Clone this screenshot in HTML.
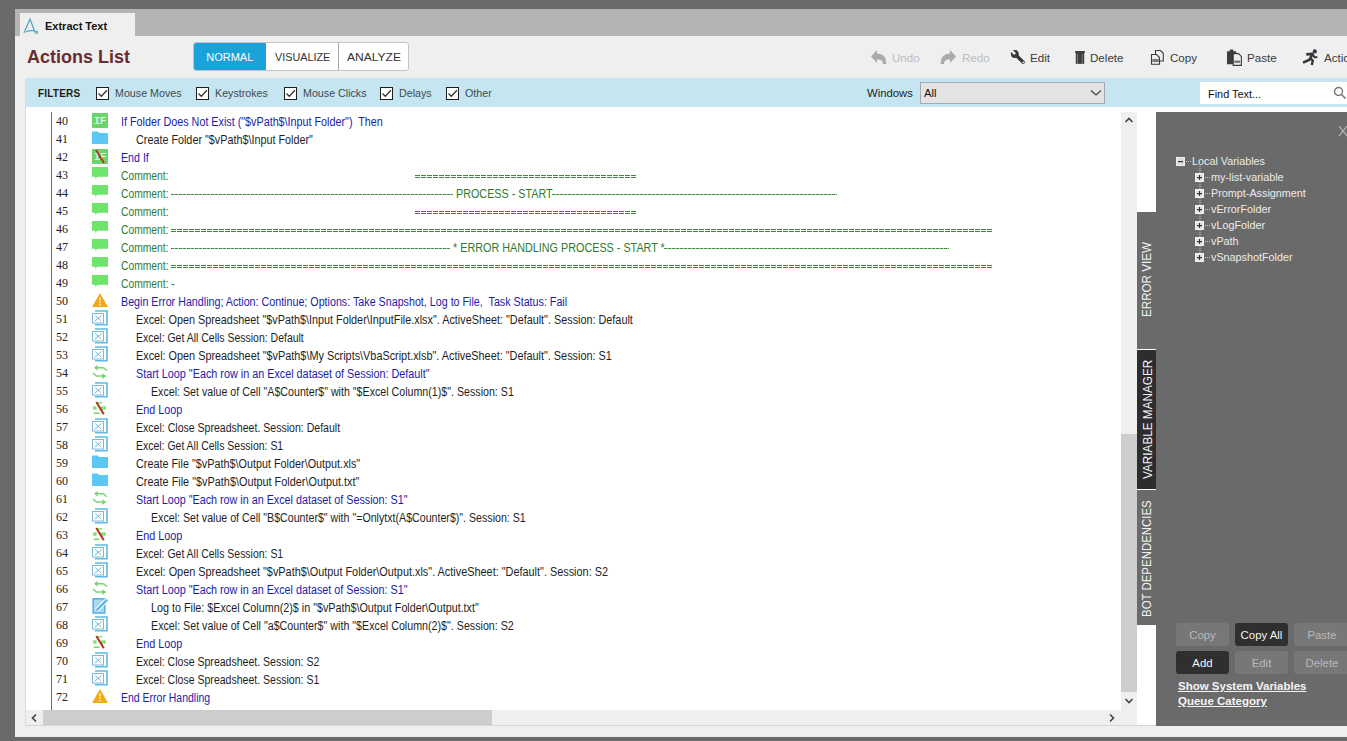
<!DOCTYPE html>
<html><head><meta charset="utf-8">
<style>
*{box-sizing:border-box;margin:0;padding:0}
html,body{width:1347px;height:741px;overflow:hidden;background:#6a6a6a;font-family:"Liberation Sans",sans-serif}
.abs{position:absolute}
#win{position:absolute;left:15px;top:9px;width:1332px;height:728px;background:#efefef}
#tabbar{position:absolute;left:15px;top:9px;width:1332px;height:27px;background:#b4b4b4}
#tab{position:absolute;left:20px;top:13px;width:115px;height:23px;background:#efefef}
#tabtxt{position:absolute;left:45px;top:18px;font-size:11px;font-weight:bold;color:#111;line-height:16px}
#title{position:absolute;left:27px;top:45px;font-size:18px;font-weight:bold;color:#6a2c30;line-height:24px}
#bgrp{position:absolute;left:193px;top:42px;width:216px;height:29px;border:1px solid #c4c4c4;border-radius:3px;background:#fff;overflow:hidden}
#bgrp div{position:absolute;top:0;height:27px;line-height:27px;font-size:11.6px;text-align:center;color:#333}
.tb{position:absolute;top:49px;height:18px}
.tbt{position:absolute;top:50px;font-size:11.6px;line-height:16px;color:#3a3a3a}
#filt{position:absolute;left:25px;top:78px;width:1322px;height:29px;background:#c5e6f0}
.cb{position:absolute;top:87px;width:13px;height:13px;border:1px solid #1e1e1e;background:#fff}
.cb svg{position:absolute;left:0;top:0}
.fl{position:absolute;top:85px;font-size:10.7px;line-height:16px;color:#3f4a50}
#code{position:absolute;left:26px;top:107px;width:1321px;height:619px;background:#fff}
.row{position:absolute;left:0;width:1095px;height:18px}
.ln{position:absolute;left:56px;top:1px;font-family:"Liberation Serif",serif;font-size:12px;line-height:16px;color:#222}
.ic{position:absolute;left:92px;top:0px;width:16px;height:16px}
.ic svg{display:block}
.tx{position:absolute;top:2px;font-size:12px;line-height:16px;white-space:pre;transform-origin:0 0}
.ctx{position:absolute}
.eq{position:absolute;height:4px;background:
  repeating-linear-gradient(90deg,#3a873a 0 4.6px,transparent 4.6px 6px) 0 0/100% 1px no-repeat,
  repeating-linear-gradient(90deg,#3a873a 0 4.6px,transparent 4.6px 6px) 0 2px/100% 1px no-repeat}
.dash{position:absolute;height:1px;background:repeating-linear-gradient(90deg,#3f8a3f 0 3.2px,#b5d5b5 3.2px 4px)}
#vline{position:absolute;left:51px;top:112px;width:1px;height:598px;background:#6a6a6a}
#vsb{position:absolute;left:1121px;top:112px;width:16px;height:614px;background:#efefef}
#vthumb{position:absolute;left:1121px;top:434px;width:16px;height:258px;background:#cdcdcd}
#hsb{position:absolute;left:26px;top:710px;width:1095px;height:16px;background:#efefef}
#hthumb{position:absolute;left:43px;top:710px;width:449px;height:15px;background:#cdcdcd}
#hline{position:absolute;left:26px;top:725px;width:1130px;height:1px;background:#d6d6d6}
#panel{position:absolute;left:1156px;top:112px;width:191px;height:614px;background:#6a6a6a}
.vtab{position:absolute;left:1137px;width:19px;background:#6a6a6a}
.vtt{position:absolute;font-size:12.5px;color:#f2f2f2;white-space:nowrap;transform-origin:0 0;line-height:14px}
.tree{position:absolute;font-size:10.8px;line-height:14px;color:#ececec;white-space:nowrap}
.pb{position:absolute;height:23px;border-radius:3px;font-size:11.4px;line-height:24px;text-align:center}
.pbd{background:#777;color:#b9b9b9}
.pba{background:#2f2f2f;color:#f4f4f4}
.lnk{position:absolute;left:1178px;font-size:11.5px;font-weight:bold;color:#f4f4f4;text-decoration:underline;line-height:14px;white-space:nowrap}
</style></head><body>
<div id="win"></div>
<div id="tabbar"></div>
<div id="tab"></div>
<svg class="abs" style="left:22px;top:17px" width="18" height="18" viewBox="0 0 18 18"><path d="M2 16 L8 2 L13 15 Q14 17 15.5 16 Q16 14 13 14 Q8 13 4 15" fill="none" stroke="#4aa6c4" stroke-width="1.2"/></svg>
<div id="tabtxt">Extract Text</div>
<div id="title">Actions List</div>
<div id="bgrp">
  <div style="left:0;width:72px;background:#19a3d8;color:#fff"><span style="display:inline-block;transform:scaleX(0.945)">NORMAL</span></div>
  <div style="left:72px;width:73px;border-left:0"><span style="display:inline-block;transform:scaleX(0.933)">VISUALIZE</span></div>
  <div style="left:144px;width:71px;border-left:1px solid #aaa"><span style="display:inline-block;transform:scaleX(1.04)">ANALYZE</span></div>
</div>
<!-- toolbar -->
<svg class="tb" style="left:869px" width="18" height="18" viewBox="0 0 18 18"><path d="M2 7.5 L8 1 V4.5 Q17.5 4.5 17.5 15 L14 15 Q14 10 8 10.5 V14 Z" fill="#ababab"/></svg>
<div class="tbt" style="left:892px;color:#bdbdbd">Undo</div>
<svg class="tb" style="left:940px" width="18" height="18" viewBox="0 0 18 18"><path d="M16 7.5 L10 1 V4.5 Q0.5 4.5 0.5 15 L4 15 Q4 10 10 10.5 V14 Z" fill="#ababab"/></svg>
<div class="tbt" style="left:962px;color:#bdbdbd">Redo</div>
<svg class="tb" style="left:1010px" width="16" height="18" viewBox="0 0 16 18"><circle cx="4.8" cy="5" r="3.9" fill="#383838"/><path d="M4.8 5 L13.2 13.2" stroke="#383838" stroke-width="3.3" stroke-linecap="round"/><path d="M6 4.2 L1.8 0 L0 1.8 L4.2 6 Z" fill="#efefef"/><circle cx="13.3" cy="13.3" r="0.9" fill="#efefef"/></svg>
<div class="tbt" style="left:1030px">Edit</div>
<svg class="tb" style="left:1074px" width="12" height="18" viewBox="0 0 12 18"><rect x="1.2" y="2" width="9.6" height="2" fill="#3c3c3c"/><rect x="1.8" y="4" width="8.4" height="10.8" fill="#3c3c3c"/><path d="M3.6 5 V14 M8.2 5 V14" stroke="#8a8a8a" stroke-width="0.9"/></svg>
<div class="tbt" style="left:1090px">Delete</div>
<svg class="tb" style="left:1150px" width="15" height="18" viewBox="0 0 15 18"><path d="M5.5 1.5 H10.5 L13.3 4.3 V12 H5.5 Z" fill="#efefef" stroke="#3c3c3c" stroke-width="1.1"/><path d="M1.5 5.5 H6.5 L9.5 8.5 V15.2 H1.5 Z" fill="#efefef" stroke="#3c3c3c" stroke-width="1.1"/><rect x="2.3" y="11.3" width="6.5" height="1.6" fill="#666"/><rect x="2.3" y="10.3" width="6.5" height="0.8" fill="#444"/></svg>
<div class="tbt" style="left:1170px">Copy</div>
<svg class="tb" style="left:1226px" width="17" height="18" viewBox="0 0 17 18"><path d="M1 2.2 H3.8 V0.4 H7.3 V2.2 H10.2 V15.2 H1 Z" fill="#3c3c3c"/><path d="M7.2 4.6 H12.5 L15.4 7.5 V16.4 H7.2 Z" fill="#efefef" stroke="#3c3c3c" stroke-width="1.1"/><rect x="8.3" y="11.5" width="6" height="2.4" fill="#777"/></svg>
<div class="tbt" style="left:1247px">Paste</div>
<svg class="tb" style="left:1302px" width="16" height="18" viewBox="0 0 16 18"><circle cx="12.8" cy="2.4" r="2.1" fill="#383838"/><g fill="none" stroke="#383838" stroke-linejoin="round"><path d="M4.2 5.4 L10.6 4.9 L7.4 10.8 L1 13.6" stroke-width="2.6"/><path d="M8.3 9.2 L10.8 11.6 L9.8 16" stroke-width="2.4"/><path d="M10.8 5.6 L12.4 8.3 L15.4 8.3" stroke-width="1.9"/></g></svg>
<div class="tbt" style="left:1324px">Actions</div>
<!-- filter bar -->
<div id="filt"></div>
<div class="fl" style="left:38px;top:86px;font-weight:bold;font-size:10px;color:#1c1c1c;letter-spacing:0.2px">FILTERS</div>
<div class="cb" style="left:96px"><svg width="11" height="11" viewBox="0 0 11 11"><path d="M1.5 5.5 L4.3 8.3 L10 2.3" fill="none" stroke="#333" stroke-width="1.3"/></svg></div>
<div class="fl" style="left:115px">Mouse Moves</div>
<div class="cb" style="left:196px"><svg width="11" height="11" viewBox="0 0 11 11"><path d="M1.5 5.5 L4.3 8.3 L10 2.3" fill="none" stroke="#333" stroke-width="1.3"/></svg></div>
<div class="fl" style="left:215px">Keystrokes</div>
<div class="cb" style="left:284px"><svg width="11" height="11" viewBox="0 0 11 11"><path d="M1.5 5.5 L4.3 8.3 L10 2.3" fill="none" stroke="#333" stroke-width="1.3"/></svg></div>
<div class="fl" style="left:303px">Mouse Clicks</div>
<div class="cb" style="left:380px"><svg width="11" height="11" viewBox="0 0 11 11"><path d="M1.5 5.5 L4.3 8.3 L10 2.3" fill="none" stroke="#333" stroke-width="1.3"/></svg></div>
<div class="fl" style="left:399px">Delays</div>
<div class="cb" style="left:446px"><svg width="11" height="11" viewBox="0 0 11 11"><path d="M1.5 5.5 L4.3 8.3 L10 2.3" fill="none" stroke="#333" stroke-width="1.3"/></svg></div>
<div class="fl" style="left:465px">Other</div>
<div class="fl" style="left:867px;font-size:11.3px;color:#222">Windows</div>
<div class="abs" style="left:920px;top:82px;width:185px;height:22px;background:#e3e3e3;border:1px solid #a3abb0"></div>
<div class="fl" style="left:924px;font-size:11.3px;color:#111;top:85px">All</div>
<svg class="abs" style="left:1090px;top:89px" width="12" height="8" viewBox="0 0 12 8"><path d="M1 1.5 L6 6 L11 1.5" fill="none" stroke="#444" stroke-width="1.2"/></svg>
<div class="abs" style="left:1200px;top:82px;width:147px;height:22px;background:#fff"></div>
<div class="fl" style="left:1208px;font-size:10.9px;color:#111;top:86px">Find Text...</div>
<svg class="abs" style="left:1333px;top:86px" width="14" height="14" viewBox="0 0 14 14"><circle cx="5.5" cy="5.5" r="4" fill="none" stroke="#777" stroke-width="1.4"/><path d="M8.5 8.5 L12.5 12.5" stroke="#777" stroke-width="1.6"/></svg>
<!-- code -->
<div id="code"></div><div class="abs" style="left:25px;top:107px;width:1px;height:619px;background:#dcdcdc"></div>
<div id="vline"></div>
<div class="row" style="top:112px"><span class="ln">40</span><span class="ic"><svg width="16" height="16" viewBox="0 0 16 16"><rect x="0" y="1" width="16" height="15" fill="#6bd56a"/><text x="8" y="11.5" font-family="Liberation Mono" font-size="10" fill="#f4fff4" text-anchor="middle" stroke="#f4fff4" stroke-width="0.2">IF</text></svg></span><span class="tx" id="t40" style="left:121px;color:#1c1ca6;transform:scaleX(0.8973)">If Folder Does Not Exist (&quot;$vPath$\Input Folder&quot;)  Then</span></div>
<div class="row" style="top:130px"><span class="ln">41</span><span class="ic"><svg width="16" height="16" viewBox="0 0 16 16"><path d="M0 1.5 H6 L7 3 H16 V14 H0 Z" fill="#5ac8f2"/></svg></span><span class="tx" id="t41" style="left:136px;color:#1e1e1e;transform:scaleX(0.8992)">Create Folder &quot;$vPath$\Input Folder&quot;</span></div>
<div class="row" style="top:148px"><span class="ln">42</span><span class="ic"><svg width="16" height="16" viewBox="0 0 16 16"><rect x="0" y="1" width="16" height="15" fill="#6bd56a"/><text x="8" y="11.5" font-family="Liberation Mono" font-size="10" fill="#f4fff4" text-anchor="middle" stroke="#f4fff4" stroke-width="0.2">IF</text><line x1="4" y1="2" x2="12" y2="15" stroke="#b5361c" stroke-width="2"/></svg></span><span class="tx" id="t42" style="left:121px;color:#1c1ca6;transform:scaleX(0.8865)">End If</span></div>
<div class="row" style="top:166px"><span class="ln">43</span><span class="ic"><svg width="16" height="16" viewBox="0 0 16 16"><path d="M0 1 H16 V10.7 H5 L3.5 13 L3 10.7 H0 Z" fill="#6de46b"/></svg></span><span class="tx" id="t43" style="left:121px;color:#2f7a2f;transform:scaleX(0.8580)">Comment:</span></div>
<div class="row" style="top:184px"><span class="ln">44</span><span class="ic"><svg width="16" height="16" viewBox="0 0 16 16"><path d="M0 1 H16 V10.7 H5 L3.5 13 L3 10.7 H0 Z" fill="#6de46b"/></svg></span><span class="tx" id="t44" style="left:121px;color:#2f7a2f;transform:scaleX(0.8580)">Comment:</span></div>
<div class="row" style="top:202px"><span class="ln">45</span><span class="ic"><svg width="16" height="16" viewBox="0 0 16 16"><path d="M0 1 H16 V10.7 H5 L3.5 13 L3 10.7 H0 Z" fill="#6de46b"/></svg></span><span class="tx" id="t45" style="left:121px;color:#2f7a2f;transform:scaleX(0.8580)">Comment:</span></div>
<div class="row" style="top:220px"><span class="ln">46</span><span class="ic"><svg width="16" height="16" viewBox="0 0 16 16"><path d="M0 1 H16 V10.7 H5 L3.5 13 L3 10.7 H0 Z" fill="#6de46b"/></svg></span><span class="tx" id="t46" style="left:121px;color:#2f7a2f;transform:scaleX(0.8580)">Comment:</span></div>
<div class="row" style="top:238px"><span class="ln">47</span><span class="ic"><svg width="16" height="16" viewBox="0 0 16 16"><path d="M0 1 H16 V10.7 H5 L3.5 13 L3 10.7 H0 Z" fill="#6de46b"/></svg></span><span class="tx" id="t47" style="left:121px;color:#2f7a2f;transform:scaleX(0.8580)">Comment:</span></div>
<div class="row" style="top:256px"><span class="ln">48</span><span class="ic"><svg width="16" height="16" viewBox="0 0 16 16"><path d="M0 1 H16 V10.7 H5 L3.5 13 L3 10.7 H0 Z" fill="#6de46b"/></svg></span><span class="tx" id="t48" style="left:121px;color:#2f7a2f;transform:scaleX(0.8580)">Comment:</span></div>
<div class="row" style="top:274px"><span class="ln">49</span><span class="ic"><svg width="16" height="16" viewBox="0 0 16 16"><path d="M0 1 H16 V10.7 H5 L3.5 13 L3 10.7 H0 Z" fill="#6de46b"/></svg></span><span class="tx" id="t49" style="left:121px;color:#2f7a2f;transform:scaleX(0.8582)">Comment: -</span></div>
<div class="row" style="top:292px"><span class="ln">50</span><span class="ic"><svg width="16" height="16" viewBox="0 0 16 16"><path d="M8 1 L16 15 H0 Z" fill="#f3a81a"/><rect x="7.1" y="5.5" width="1.8" height="2.8" fill="#fbe9b0"/><rect x="7.1" y="9.2" width="1.8" height="1.5" fill="#fbe9b0"/><rect x="7.1" y="11.8" width="1.8" height="1.6" fill="#fbe9b0"/></svg></span><span class="tx" id="t50" style="left:121px;color:#1c1ca6;transform:scaleX(0.8925)">Begin Error Handling; Action: Continue; Options: Take Snapshot, Log to File,  Task Status: Fail</span></div>
<div class="row" style="top:310px"><span class="ln">51</span><span class="ic"><svg width="16" height="16" viewBox="0 0 16 16"><path d="M3 1 H15 V14.8 H3" fill="none" stroke="#5bbbe8" stroke-width="1.6"/><rect x="0.5" y="3.5" width="11" height="9.5" fill="#fff" stroke="#7ab8da" stroke-width="1"/><path d="M2.8 11.2 L9.5 5.5 M3.2 5.5 L9.2 11" stroke="#72b4d8" stroke-width="1"/></svg></span><span class="tx" id="t51" style="left:136px;color:#1e1e1e;transform:scaleX(0.9022)">Excel: Open Spreadsheet &quot;$vPath$\Input Folder\InputFile.xlsx&quot;. ActiveSheet: &quot;Default&quot;. Session: Default</span></div>
<div class="row" style="top:328px"><span class="ln">52</span><span class="ic"><svg width="16" height="16" viewBox="0 0 16 16"><path d="M3 1 H15 V14.8 H3" fill="none" stroke="#5bbbe8" stroke-width="1.6"/><rect x="0.5" y="3.5" width="11" height="9.5" fill="#fff" stroke="#7ab8da" stroke-width="1"/><path d="M2.8 11.2 L9.5 5.5 M3.2 5.5 L9.2 11" stroke="#72b4d8" stroke-width="1"/></svg></span><span class="tx" id="t52" style="left:136px;color:#1e1e1e;transform:scaleX(0.8735)">Excel: Get All Cells Session: Default</span></div>
<div class="row" style="top:346px"><span class="ln">53</span><span class="ic"><svg width="16" height="16" viewBox="0 0 16 16"><path d="M3 1 H15 V14.8 H3" fill="none" stroke="#5bbbe8" stroke-width="1.6"/><rect x="0.5" y="3.5" width="11" height="9.5" fill="#fff" stroke="#7ab8da" stroke-width="1"/><path d="M2.8 11.2 L9.5 5.5 M3.2 5.5 L9.2 11" stroke="#72b4d8" stroke-width="1"/></svg></span><span class="tx" id="t53" style="left:136px;color:#1e1e1e;transform:scaleX(0.9046)">Excel: Open Spreadsheet &quot;$vPath$\My Scripts\VbaScript.xlsb&quot;. ActiveSheet: &quot;Default&quot;. Session: S1</span></div>
<div class="row" style="top:364px"><span class="ln">54</span><span class="ic"><svg width="16" height="16" viewBox="0 0 16 16"><path d="M14.8 6.8 L11.6 3.8 H3" fill="none" stroke="#79d677" stroke-width="1.5"/><path d="M5.8 1 L1.8 3.8 L5.8 6.6 Z" fill="#79d677"/><path d="M1.2 9 L4.4 12.1 H13" fill="none" stroke="#79d677" stroke-width="1.5"/><path d="M10.2 9.2 L14.4 12.1 L10.2 15 Z" fill="#79d677"/></svg></span><span class="tx" id="t54" style="left:136px;color:#1c1ca6;transform:scaleX(0.9005)">Start Loop &quot;Each row in an Excel dataset of Session: Default&quot;</span></div>
<div class="row" style="top:382px"><span class="ln">55</span><span class="ic"><svg width="16" height="16" viewBox="0 0 16 16"><path d="M3 1 H15 V14.8 H3" fill="none" stroke="#5bbbe8" stroke-width="1.6"/><rect x="0.5" y="3.5" width="11" height="9.5" fill="#fff" stroke="#7ab8da" stroke-width="1"/><path d="M2.8 11.2 L9.5 5.5 M3.2 5.5 L9.2 11" stroke="#72b4d8" stroke-width="1"/></svg></span><span class="tx" id="t55" style="left:151px;color:#1e1e1e;transform:scaleX(0.8880)">Excel: Set value of Cell &quot;A$Counter$&quot; with &quot;$Excel Column(1)$&quot;. Session: S1</span></div>
<div class="row" style="top:400px"><span class="ln">56</span><span class="ic"><svg width="16" height="16" viewBox="0 0 16 16"><path d="M4.5 2.9 H10.2 M1.8 13.3 H7.5" stroke="#6fdc5c" stroke-width="1.4"/><rect x="0.9" y="6.4" width="3.6" height="3.2" fill="#6fdc5c"/><rect x="9" y="6.4" width="4.6" height="3.2" fill="#6fdc5c"/><path d="M3 7.2 L1.5 8 L3 8.8 M10.5 7.2 L12 8 L10.5 8.8" stroke="#c8f2c0" stroke-width="0.6" fill="none"/><line x1="4.3" y1="1.9" x2="11.8" y2="14.2" stroke="#b3301a" stroke-width="2"/></svg></span><span class="tx" id="t56" style="left:136px;color:#1c1ca6;transform:scaleX(0.8990)">End Loop</span></div>
<div class="row" style="top:418px"><span class="ln">57</span><span class="ic"><svg width="16" height="16" viewBox="0 0 16 16"><path d="M3 1 H15 V14.8 H3" fill="none" stroke="#5bbbe8" stroke-width="1.6"/><rect x="0.5" y="3.5" width="11" height="9.5" fill="#fff" stroke="#7ab8da" stroke-width="1"/><path d="M2.8 11.2 L9.5 5.5 M3.2 5.5 L9.2 11" stroke="#72b4d8" stroke-width="1"/></svg></span><span class="tx" id="t57" style="left:136px;color:#1e1e1e;transform:scaleX(0.8793)">Excel: Close Spreadsheet. Session: Default</span></div>
<div class="row" style="top:436px"><span class="ln">58</span><span class="ic"><svg width="16" height="16" viewBox="0 0 16 16"><path d="M3 1 H15 V14.8 H3" fill="none" stroke="#5bbbe8" stroke-width="1.6"/><rect x="0.5" y="3.5" width="11" height="9.5" fill="#fff" stroke="#7ab8da" stroke-width="1"/><path d="M2.8 11.2 L9.5 5.5 M3.2 5.5 L9.2 11" stroke="#72b4d8" stroke-width="1"/></svg></span><span class="tx" id="t58" style="left:136px;color:#1e1e1e;transform:scaleX(0.8723)">Excel: Get All Cells Session: S1</span></div>
<div class="row" style="top:454px"><span class="ln">59</span><span class="ic"><svg width="16" height="16" viewBox="0 0 16 16"><path d="M0 1.5 H6 L7 3 H16 V14 H0 Z" fill="#5ac8f2"/></svg></span><span class="tx" id="t59" style="left:136px;color:#1e1e1e;transform:scaleX(0.9017)">Create File &quot;$vPath$\Output Folder\Output.xls&quot;</span></div>
<div class="row" style="top:472px"><span class="ln">60</span><span class="ic"><svg width="16" height="16" viewBox="0 0 16 16"><path d="M0 1.5 H6 L7 3 H16 V14 H0 Z" fill="#5ac8f2"/></svg></span><span class="tx" id="t60" style="left:136px;color:#1e1e1e;transform:scaleX(0.9058)">Create File &quot;$vPath$\Output Folder\Output.txt&quot;</span></div>
<div class="row" style="top:490px"><span class="ln">61</span><span class="ic"><svg width="16" height="16" viewBox="0 0 16 16"><path d="M14.8 6.8 L11.6 3.8 H3" fill="none" stroke="#79d677" stroke-width="1.5"/><path d="M5.8 1 L1.8 3.8 L5.8 6.6 Z" fill="#79d677"/><path d="M1.2 9 L4.4 12.1 H13" fill="none" stroke="#79d677" stroke-width="1.5"/><path d="M10.2 9.2 L14.4 12.1 L10.2 15 Z" fill="#79d677"/></svg></span><span class="tx" id="t61" style="left:136px;color:#1c1ca6;transform:scaleX(0.8969)">Start Loop &quot;Each row in an Excel dataset of Session: S1&quot;</span></div>
<div class="row" style="top:508px"><span class="ln">62</span><span class="ic"><svg width="16" height="16" viewBox="0 0 16 16"><path d="M3 1 H15 V14.8 H3" fill="none" stroke="#5bbbe8" stroke-width="1.6"/><rect x="0.5" y="3.5" width="11" height="9.5" fill="#fff" stroke="#7ab8da" stroke-width="1"/><path d="M2.8 11.2 L9.5 5.5 M3.2 5.5 L9.2 11" stroke="#72b4d8" stroke-width="1"/></svg></span><span class="tx" id="t62" style="left:151px;color:#1e1e1e;transform:scaleX(0.8862)">Excel: Set value of Cell &quot;B$Counter$&quot; with &quot;=Onlytxt(A$Counter$)&quot;. Session: S1</span></div>
<div class="row" style="top:526px"><span class="ln">63</span><span class="ic"><svg width="16" height="16" viewBox="0 0 16 16"><path d="M4.5 2.9 H10.2 M1.8 13.3 H7.5" stroke="#6fdc5c" stroke-width="1.4"/><rect x="0.9" y="6.4" width="3.6" height="3.2" fill="#6fdc5c"/><rect x="9" y="6.4" width="4.6" height="3.2" fill="#6fdc5c"/><path d="M3 7.2 L1.5 8 L3 8.8 M10.5 7.2 L12 8 L10.5 8.8" stroke="#c8f2c0" stroke-width="0.6" fill="none"/><line x1="4.3" y1="1.9" x2="11.8" y2="14.2" stroke="#b3301a" stroke-width="2"/></svg></span><span class="tx" id="t63" style="left:136px;color:#1c1ca6;transform:scaleX(0.8990)">End Loop</span></div>
<div class="row" style="top:544px"><span class="ln">64</span><span class="ic"><svg width="16" height="16" viewBox="0 0 16 16"><path d="M3 1 H15 V14.8 H3" fill="none" stroke="#5bbbe8" stroke-width="1.6"/><rect x="0.5" y="3.5" width="11" height="9.5" fill="#fff" stroke="#7ab8da" stroke-width="1"/><path d="M2.8 11.2 L9.5 5.5 M3.2 5.5 L9.2 11" stroke="#72b4d8" stroke-width="1"/></svg></span><span class="tx" id="t64" style="left:136px;color:#1e1e1e;transform:scaleX(0.8723)">Excel: Get All Cells Session: S1</span></div>
<div class="row" style="top:562px"><span class="ln">65</span><span class="ic"><svg width="16" height="16" viewBox="0 0 16 16"><path d="M3 1 H15 V14.8 H3" fill="none" stroke="#5bbbe8" stroke-width="1.6"/><rect x="0.5" y="3.5" width="11" height="9.5" fill="#fff" stroke="#7ab8da" stroke-width="1"/><path d="M2.8 11.2 L9.5 5.5 M3.2 5.5 L9.2 11" stroke="#72b4d8" stroke-width="1"/></svg></span><span class="tx" id="t65" style="left:136px;color:#1e1e1e;transform:scaleX(0.9065)">Excel: Open Spreadsheet &quot;$vPath$\Output Folder\Output.xls&quot;. ActiveSheet: &quot;Default&quot;. Session: S2</span></div>
<div class="row" style="top:580px"><span class="ln">66</span><span class="ic"><svg width="16" height="16" viewBox="0 0 16 16"><path d="M14.8 6.8 L11.6 3.8 H3" fill="none" stroke="#79d677" stroke-width="1.5"/><path d="M5.8 1 L1.8 3.8 L5.8 6.6 Z" fill="#79d677"/><path d="M1.2 9 L4.4 12.1 H13" fill="none" stroke="#79d677" stroke-width="1.5"/><path d="M10.2 9.2 L14.4 12.1 L10.2 15 Z" fill="#79d677"/></svg></span><span class="tx" id="t66" style="left:136px;color:#1c1ca6;transform:scaleX(0.8969)">Start Loop &quot;Each row in an Excel dataset of Session: S1&quot;</span></div>
<div class="row" style="top:598px"><span class="ln">67</span><span class="ic"><svg width="16" height="16" viewBox="0 0 16 16"><rect x="1.2" y="0.8" width="11.6" height="14.2" fill="#a8d9f1" stroke="#59b3e3" stroke-width="1.6"/><path d="M4.6 12.2 L15.2 1.6" stroke="#fff" stroke-width="4.2"/><path d="M4.6 12.2 L15.2 1.6" stroke="#59b3e3" stroke-width="2.2"/></svg></span><span class="tx" id="t67" style="left:151px;color:#1e1e1e;transform:scaleX(0.8972)">Log to File: $Excel Column(2)$ in &quot;$vPath$\Output Folder\Output.txt&quot;</span></div>
<div class="row" style="top:616px"><span class="ln">68</span><span class="ic"><svg width="16" height="16" viewBox="0 0 16 16"><path d="M3 1 H15 V14.8 H3" fill="none" stroke="#5bbbe8" stroke-width="1.6"/><rect x="0.5" y="3.5" width="11" height="9.5" fill="#fff" stroke="#7ab8da" stroke-width="1"/><path d="M2.8 11.2 L9.5 5.5 M3.2 5.5 L9.2 11" stroke="#72b4d8" stroke-width="1"/></svg></span><span class="tx" id="t68" style="left:151px;color:#1e1e1e;transform:scaleX(0.8909)">Excel: Set value of Cell &quot;a$Counter$&quot; with &quot;$Excel Column(2)$&quot;. Session: S2</span></div>
<div class="row" style="top:634px"><span class="ln">69</span><span class="ic"><svg width="16" height="16" viewBox="0 0 16 16"><path d="M4.5 2.9 H10.2 M1.8 13.3 H7.5" stroke="#6fdc5c" stroke-width="1.4"/><rect x="0.9" y="6.4" width="3.6" height="3.2" fill="#6fdc5c"/><rect x="9" y="6.4" width="4.6" height="3.2" fill="#6fdc5c"/><path d="M3 7.2 L1.5 8 L3 8.8 M10.5 7.2 L12 8 L10.5 8.8" stroke="#c8f2c0" stroke-width="0.6" fill="none"/><line x1="4.3" y1="1.9" x2="11.8" y2="14.2" stroke="#b3301a" stroke-width="2"/></svg></span><span class="tx" id="t69" style="left:136px;color:#1c1ca6;transform:scaleX(0.8990)">End Loop</span></div>
<div class="row" style="top:652px"><span class="ln">70</span><span class="ic"><svg width="16" height="16" viewBox="0 0 16 16"><path d="M3 1 H15 V14.8 H3" fill="none" stroke="#5bbbe8" stroke-width="1.6"/><rect x="0.5" y="3.5" width="11" height="9.5" fill="#fff" stroke="#7ab8da" stroke-width="1"/><path d="M2.8 11.2 L9.5 5.5 M3.2 5.5 L9.2 11" stroke="#72b4d8" stroke-width="1"/></svg></span><span class="tx" id="t70" style="left:136px;color:#1e1e1e;transform:scaleX(0.8780)">Excel: Close Spreadsheet. Session: S2</span></div>
<div class="row" style="top:670px"><span class="ln">71</span><span class="ic"><svg width="16" height="16" viewBox="0 0 16 16"><path d="M3 1 H15 V14.8 H3" fill="none" stroke="#5bbbe8" stroke-width="1.6"/><rect x="0.5" y="3.5" width="11" height="9.5" fill="#fff" stroke="#7ab8da" stroke-width="1"/><path d="M2.8 11.2 L9.5 5.5 M3.2 5.5 L9.2 11" stroke="#72b4d8" stroke-width="1"/></svg></span><span class="tx" id="t71" style="left:136px;color:#1e1e1e;transform:scaleX(0.8780)">Excel: Close Spreadsheet. Session: S1</span></div>
<div class="row" style="top:688px"><span class="ln">72</span><span class="ic"><svg width="16" height="16" viewBox="0 0 16 16"><path d="M8 1 L16 15 H0 Z" fill="#f3a81a"/><rect x="7.1" y="5.5" width="1.8" height="2.8" fill="#fbe9b0"/><rect x="7.1" y="9.2" width="1.8" height="1.5" fill="#fbe9b0"/><rect x="7.1" y="11.8" width="1.8" height="1.6" fill="#fbe9b0"/></svg></span><span class="tx" id="t72" style="left:121px;color:#1c1ca6;transform:scaleX(0.8740)">End Error Handling</span></div>
<div class="eq" style="left:415px;top:175px;width:221px"></div><div class="dash" style="left:171px;top:194px;width:282px"></div><span class="tx ctx" id="p1" style="left:455.5px;top:186px;color:#2f7a2f;transform:scaleX(0.8989)">PROCESS - START</span><div class="dash" style="left:552px;top:194px;width:285px"></div><div class="eq" style="left:415px;top:211px;width:221px"></div><div class="eq" style="left:171px;top:229px;width:822px"></div><div class="dash" style="left:171px;top:248px;width:279px"></div><span class="tx ctx" id="p2" style="left:453px;top:240px;color:#2f7a2f;transform:scaleX(0.8998)">* ERROR HANDLING PROCESS - START *</span><div class="dash" style="left:664px;top:248px;width:285px"></div><div class="eq" style="left:171px;top:265px;width:822px"></div>
<div id="vsb"></div>
<div id="vthumb"></div>
<svg class="abs" style="left:1124px;top:116px" width="10" height="8" viewBox="0 0 10 8"><path d="M1.5 6 L5 2.5 L8.5 6" fill="none" stroke="#444" stroke-width="1.6"/></svg>
<svg class="abs" style="left:1124px;top:697px" width="10" height="8" viewBox="0 0 10 8"><path d="M1.5 2 L5 5.5 L8.5 2" fill="none" stroke="#444" stroke-width="1.6"/></svg>
<div id="hsb"></div>
<div id="hthumb"></div>
<svg class="abs" style="left:30px;top:713px" width="8" height="10" viewBox="0 0 8 10"><path d="M6 1.5 L2.5 5 L6 8.5" fill="none" stroke="#444" stroke-width="1.6"/></svg>
<svg class="abs" style="left:1108px;top:713px" width="8" height="10" viewBox="0 0 8 10"><path d="M2 1.5 L5.5 5 L2 8.5" fill="none" stroke="#444" stroke-width="1.6"/></svg>
<div id="hline"></div>
<!-- right panel -->
<div id="panel"></div>
<div class="vtab" style="top:212px;height:137px"></div>
<div class="vtab" style="top:349px;height:141px;background:#2d2d2d;border-top:1px solid #fff;border-bottom:1px solid #fff"></div>
<div class="vtab" style="top:490px;height:135px"></div>
<div class="vtt" style="left:1140px;top:317px;transform:rotate(-90deg) scaleX(0.93)">ERROR VIEW</div>
<div class="vtt" style="left:1140.5px;top:478.5px;transform:rotate(-90deg) scaleX(0.94)">VARIABLE MANAGER</div>
<div class="vtt" style="left:1140px;top:617px;transform:rotate(-90deg) scaleX(0.915)">BOT DEPENDENCIES</div>
<svg class="abs" style="left:1338px;top:125px" width="9" height="12" viewBox="0 0 9 12"><path d="M1 1 L9 11 M9 1 L1 11" stroke="#bbb" stroke-width="1.2"/></svg>
<!-- tree -->
<svg class="abs" style="left:1176px;top:156px" width="100" height="110" viewBox="0 0 100 110">
  <rect x="0.5" y="1.5" width="8" height="8" fill="#ddd" stroke="#eee"/><rect x="2" y="5" width="5" height="1.2" fill="#333"/>
  <path d="M10 5.5 H15" stroke="#ccc" stroke-dasharray="1 1"/>
  <path d="M24 10 V102" stroke="#ccc" stroke-dasharray="1 1"/>
</svg>
<div class="tree" style="left:1192px;top:154px">Local Variables</div>
<svg class="abs" style="left:1195px;top:173px" width="16" height="10" viewBox="0 0 16 10"><rect x="0.5" y="0.5" width="8" height="8" fill="#e6e6e6" stroke="#f0f0f0"/><rect x="2" y="4" width="5" height="1.2" fill="#333"/><rect x="3.9" y="2" width="1.2" height="5" fill="#333"/><path d="M10 4.5 H15" stroke="#ccc" stroke-dasharray="1 1"/></svg><div class="tree" style="left:1211px;top:170px">my-list-variable</div><svg class="abs" style="left:1195px;top:189px" width="16" height="10" viewBox="0 0 16 10"><rect x="0.5" y="0.5" width="8" height="8" fill="#e6e6e6" stroke="#f0f0f0"/><rect x="2" y="4" width="5" height="1.2" fill="#333"/><rect x="3.9" y="2" width="1.2" height="5" fill="#333"/><path d="M10 4.5 H15" stroke="#ccc" stroke-dasharray="1 1"/></svg><div class="tree" style="left:1211px;top:186px">Prompt-Assignment</div><svg class="abs" style="left:1195px;top:205px" width="16" height="10" viewBox="0 0 16 10"><rect x="0.5" y="0.5" width="8" height="8" fill="#e6e6e6" stroke="#f0f0f0"/><rect x="2" y="4" width="5" height="1.2" fill="#333"/><rect x="3.9" y="2" width="1.2" height="5" fill="#333"/><path d="M10 4.5 H15" stroke="#ccc" stroke-dasharray="1 1"/></svg><div class="tree" style="left:1211px;top:202px">vErrorFolder</div><svg class="abs" style="left:1195px;top:221px" width="16" height="10" viewBox="0 0 16 10"><rect x="0.5" y="0.5" width="8" height="8" fill="#e6e6e6" stroke="#f0f0f0"/><rect x="2" y="4" width="5" height="1.2" fill="#333"/><rect x="3.9" y="2" width="1.2" height="5" fill="#333"/><path d="M10 4.5 H15" stroke="#ccc" stroke-dasharray="1 1"/></svg><div class="tree" style="left:1211px;top:218px">vLogFolder</div><svg class="abs" style="left:1195px;top:237px" width="16" height="10" viewBox="0 0 16 10"><rect x="0.5" y="0.5" width="8" height="8" fill="#e6e6e6" stroke="#f0f0f0"/><rect x="2" y="4" width="5" height="1.2" fill="#333"/><rect x="3.9" y="2" width="1.2" height="5" fill="#333"/><path d="M10 4.5 H15" stroke="#ccc" stroke-dasharray="1 1"/></svg><div class="tree" style="left:1211px;top:234px">vPath</div><svg class="abs" style="left:1195px;top:253px" width="16" height="10" viewBox="0 0 16 10"><rect x="0.5" y="0.5" width="8" height="8" fill="#e6e6e6" stroke="#f0f0f0"/><rect x="2" y="4" width="5" height="1.2" fill="#333"/><rect x="3.9" y="2" width="1.2" height="5" fill="#333"/><path d="M10 4.5 H15" stroke="#ccc" stroke-dasharray="1 1"/></svg><div class="tree" style="left:1211px;top:250px">vSnapshotFolder</div>
<div class="pb pbd" style="left:1176px;top:623px;width:53px">Copy</div>
<div class="pb pba" style="left:1235px;top:623px;width:53px">Copy All</div>
<div class="pb pbd" style="left:1294px;top:623px;width:56px">Paste</div>
<div class="pb pba" style="left:1176px;top:651px;width:53px">Add</div>
<div class="pb pbd" style="left:1235px;top:651px;width:53px">Edit</div>
<div class="pb pbd" style="left:1294px;top:651px;width:56px">Delete</div>
<div class="lnk" style="top:679px">Show System Variables</div>
<div class="lnk" style="top:694px">Queue Category</div>
</body></html>
